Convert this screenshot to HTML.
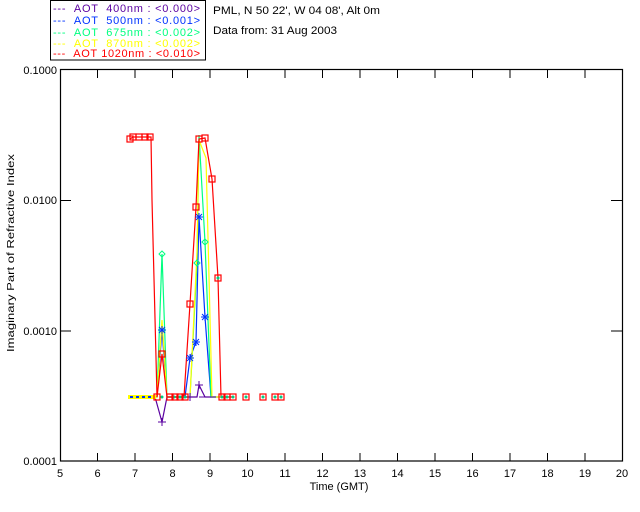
<!DOCTYPE html>
<html><head><meta charset="utf-8"><style>
html,body{margin:0;padding:0;background:#fff;}
svg{display:block;font-family:"Liberation Sans","DejaVu Sans",sans-serif;}
</style></head><body>
<svg width="640" height="512" viewBox="0 0 640 512" xmlns="http://www.w3.org/2000/svg">
<rect width="640" height="512" fill="#fff"/>
<rect x="50.5" y="0.5" width="155" height="59.5" fill="none" stroke="#000" stroke-width="1"/>
<g font-size="11">
<text x="53" y="12" fill="#5a00a0" textLength="147" lengthAdjust="spacing">--- &#160;AOT &#160;400nm : &lt;0.000&gt;</text>
<text x="53" y="24" fill="#0033ff" textLength="147" lengthAdjust="spacing">--- &#160;AOT &#160;500nm : &lt;0.001&gt;</text>
<text x="53" y="36" fill="#00ff80" textLength="147" lengthAdjust="spacing">--- &#160;AOT &#160;675nm : &lt;0.002&gt;</text>
<text x="53" y="47" fill="#ffff00" textLength="147" lengthAdjust="spacing">--- &#160;AOT &#160;870nm : &lt;0.002&gt;</text>
<text x="53" y="57" fill="#ff0000" textLength="147" lengthAdjust="spacing">--- &#160;AOT 1020nm : &lt;0.010&gt;</text>
</g>
<g font-size="11" fill="#000">
<text x="213" y="14" textLength="167" lengthAdjust="spacingAndGlyphs">PML, N 50 22', W 04 08', Alt 0m</text>
<text x="213" y="34" textLength="124" lengthAdjust="spacingAndGlyphs">Data from: 31 Aug 2003</text>
</g>
<rect x="60.5" y="69.5" width="562" height="391.5" fill="none" stroke="#000" stroke-width="1.2"/>
<g stroke="#000" stroke-width="1">
<path d="M97.5 461V453M135 461V453M172.5 461V453M210 461V453M247.5 461V453M285 461V453M322.5 461V453M360 461V453M397.5 461V453M435 461V453M472.5 461V453M510 461V453M547.5 461V453M585 461V453"/>
<path d="M97.5 70V78M135 70V78M172.5 70V78M210 70V78M247.5 70V78M285 70V78M322.5 70V78M360 70V78M397.5 70V78M435 70V78M472.5 70V78M510 70V78M547.5 70V78M585 70V78"/>
<path d="M60 200.5H71M60 331H71M611 200.5H622M611 331H622"/>
</g>
<g font-size="11" fill="#000" text-anchor="end">
<text x="57" y="74">0.1000</text>
<text x="57" y="204">0.0100</text>
<text x="57" y="335">0.0010</text>
<text x="57" y="465">0.0001</text>
</g>
<g font-size="11" fill="#000" text-anchor="middle">
<text x="60" y="477">5</text><text x="97.5" y="477">6</text><text x="135" y="477">7</text><text x="172.5" y="477">8</text><text x="210" y="477">9</text><text x="247.5" y="477">10</text><text x="285" y="477">11</text><text x="322.5" y="477">12</text><text x="360" y="477">13</text><text x="397.5" y="477">14</text><text x="435" y="477">15</text><text x="472.5" y="477">16</text><text x="510" y="477">17</text><text x="547.5" y="477">18</text><text x="585" y="477">19</text><text x="622" y="477">20</text>
<text x="339" y="490">Time (GMT)</text>
<text transform="translate(14,253) rotate(-90)" font-size="10.5" textLength="198" lengthAdjust="spacingAndGlyphs">Imaginary Part of Refractive Index</text>
</g>
<g fill="none" stroke-width="1.2">
<polyline stroke="#5a00a0" points="128,397 155,397 162,422 167,397 190,397 197,397 199,385 205,397 211,397"/>
<polyline stroke="#0033ff" points="128,397 157,397 162,330 167,397 185,397 190,358 196,342 199,217 205,317 211,397 222,397"/>
<polyline stroke="#00ff80" points="128,397 157,397 162,254 167,397 190,397 197,263 199,135 205,242 211,397 222,397"/>
<polyline stroke="#ffff00" points="128,397 157,397 162,320 167,397 190,397 197,252 199,140 206,158 212,397 222,397"/>
<polyline stroke="#ff0000" points="130,139 133,137 139,137 145,137 151,137 152,200 157,397 162,354 167,397 170,397 179,397 184,397 190,304 196,207 199,139 205,138 212,179 218,278 221,397 227,397 233,397"/>
</g>
<g fill="none" stroke="#0033ff" stroke-width="1">
<path d="M158 330h8M162 326v8M159 327l6 6M165 327l-6 6"/>
<path d="M186 358h8M190 354v8M187 355l6 6M193 355l-6 6"/>
<path d="M192 342h8M196 338v8M193 339l6 6M199 339l-6 6"/>
<path d="M195 217h8M199 213v8M196 214l6 6M202 214l-6 6"/>
<path d="M201 317h8M205 313v8M202 314l6 6M208 314l-6 6"/>
</g>
<g fill="none" stroke="#5a00a0" stroke-width="1">
<path d="M158 422h8M162 418v8M195 385h8M199 381v8M186 397h8M190 393v8M210 397h6M199 397h6"/>
</g>
<g fill="none" stroke="#00ff80" stroke-width="1">
<path d="M162 251l3 3-3 3-3-3z M197 260l3 3-3 3-3-3z M205 239l3 3-3 3-3-3z"/>
</g>
<path d="M128 395h28v4h-28z" fill="#ffff00"/>
<path d="M130 396h3v2h-3zM136 396h3v2h-3zM142 396h3v2h-3zM148 396h3v2h-3z" fill="#0033ff"/>
<g fill="#00cc80"><circle cx="162" cy="397" r="1.5"/><circle cx="174" cy="397" r="1.5"/><circle cx="180" cy="397" r="1.5"/><circle cx="185" cy="397" r="1.5"/><circle cx="222" cy="397" r="1.5"/><circle cx="227" cy="397" r="1.5"/><circle cx="233" cy="397" r="1.5"/><circle cx="246" cy="397" r="1.5"/><circle cx="263" cy="397" r="1.5"/><circle cx="275" cy="397" r="1.5"/><circle cx="281" cy="397" r="1.5"/><circle cx="218" cy="278" r="1.5"/></g>
<g fill="none" stroke="#ff0000" stroke-width="1.2">
<rect x="127" y="136" width="6" height="6"/><rect x="130" y="134" width="6" height="6"/><rect x="136" y="134" width="6" height="6"/><rect x="142" y="134" width="6" height="6"/><rect x="147" y="134" width="6" height="6"/>
<rect x="159" y="351" width="6" height="6"/><rect x="187" y="301" width="6" height="6"/><rect x="193" y="204" width="6" height="6"/><rect x="196" y="136" width="6" height="6"/><rect x="202" y="135" width="6" height="6"/><rect x="209" y="176" width="6" height="6"/><rect x="215" y="275" width="6" height="6"/>
<rect x="154" y="394" width="6" height="6"/><rect x="167" y="394" width="6" height="6"/><rect x="172" y="394" width="6" height="6"/><rect x="177" y="394" width="6" height="6"/><rect x="182" y="394" width="6" height="6"/>
<rect x="219" y="394" width="6" height="6"/><rect x="224" y="394" width="6" height="6"/><rect x="230" y="394" width="6" height="6"/><rect x="243" y="394" width="6" height="6"/><rect x="260" y="394" width="6" height="6"/><rect x="272" y="394" width="6" height="6"/><rect x="278" y="394" width="6" height="6"/>
</g>
</svg>
</body></html>
